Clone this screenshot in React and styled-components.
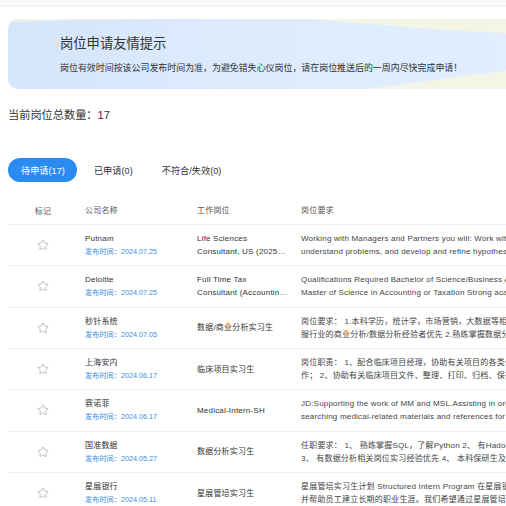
import React from "react"
import styled, { createGlobalStyle } from "styled-components"
import { Star } from "lucide-react"

const GlobalStyle = createGlobalStyle`
  html, body {
    margin: 0;
    padding: 0;
    background: #fff;
    overflow: hidden;
  }
  body {
    font-family: "Liberation Sans", "Noto Sans CJK SC", sans-serif;
    color: #333;
  }
`

const jobs = [
  {
    company: "Putnam",
    date: "2024.07.25",
    title: "Life Sciences Consultant, US (2025 Graduate Program)",
    req: [
      "Working with Managers and Partners you will: Work with clients to",
      "understand problems, and develop and refine hypotheses to solve them",
    ],
  },
  {
    company: "Deloitte",
    date: "2024.07.25",
    title: "Full Time Tax Consultant (Accounting Services)",
    req: [
      "Qualifications Required Bachelor of Science/Business Administration",
      "Master of Science in Accounting or Taxation Strong academic record",
    ],
  },
  {
    company: "秒针系统",
    date: "2024.07.05",
    title: "数据/商业分析实习生",
    req: [
      "岗位要求： 1.本科学历，统计学，市场营销，大数据等相关专业",
      "服行业的商业分析/数据分析经验者优先 2.熟练掌握数据分析工具",
    ],
  },
  {
    company: "上海安内",
    date: "2024.06.17",
    title: "临床项目实习生",
    req: [
      "岗位职责： 1、配合临床项目经理，协助有关项目的各类会议工",
      "作； 2、协助有关临床项目文件、整理、打印、归档、保存",
    ],
  },
  {
    company: "赛诺菲",
    date: "2024.06.17",
    title: "Medical-Intern-SH",
    req: [
      "JD:Supporting the work of MM and MSL.Assisting in organizing",
      "searching medical-related materials and references for the team",
    ],
  },
  {
    company: "国准数据",
    date: "2024.05.27",
    title: "数据分析实习生",
    req: [
      "任职要求： 1、 熟练掌握SQL，了解Python 2、 有Hadoop经验",
      "3、 有数据分析相关岗位实习经验优先 4、 本科保研生及在读",
    ],
  },
  {
    company: "星展银行",
    date: "2024.05.11",
    title: "星展管培实习生",
    req: [
      "星展管培实习生计划 Structured Intern Program 在星展银行",
      "并帮助员工建立长期的职业生涯。我们希望通过星展管培实习",
    ],
  },
]

const tabs = [
  { label: "待申请(17)", active: true },
  { label: "已申请(0)" },
  { label: "不符合/失效(0)" },
]

const App = () => (
  <Page>
    <GlobalStyle />
    <TopBar />
    <Content>
      <Banner>
        <BannerDeco viewBox="0 0 498 70" preserveAspectRatio="none">
          <path d="M300 0 C380 6 440 12 498 14 L498 0 Z" fill="#f4f6e3" />
          <path d="M0 0 L0 3 C60 1 140 0 220 0 Z" fill="#eef2e8" />
          <path d="M360 70 C420 62 460 56 498 52 L498 70 Z" fill="#f3f6e6" />
        </BannerDeco>
        <BannerTitle>岗位申请友情提示</BannerTitle>
        <BannerText>
          岗位有效时间按该公司发布时间为准，为避免错失心仪岗位，请在岗位推送后的一周内尽快完成申请！
        </BannerText>
      </Banner>

      <Count>当前岗位总数量：17</Count>

      <Tabs>
        {tabs.map(t => (
          <Tab key={t.label} $active={t.active}>
            {t.label}
          </Tab>
        ))}
      </Tabs>

      <Table>
        <HeaderRow>
          <MarkCell>标记</MarkCell>
          <Cell>公司名称</Cell>
          <Cell>工作岗位</Cell>
          <Cell>岗位要求</Cell>
        </HeaderRow>
        {jobs.map(job => (
          <Row key={job.company}>
            <MarkCell>
              <Star size={12} strokeWidth={1.1} color="#909090" />
            </MarkCell>
            <Cell>
              <Company>{job.company}</Company>
              <PubDate>发布时间：{job.date}</PubDate>
            </Cell>
            <Cell>
              <JobTitle>{job.title}</JobTitle>
            </Cell>
            <Cell>
              {job.req.map(line => (
                <ReqLine key={line}>{line}</ReqLine>
              ))}
            </Cell>
          </Row>
        ))}
      </Table>
    </Content>
  </Page>
)

export default App

const Page = styled.div`
  width: 506px;
  height: 506px;
  overflow: hidden;
`

const TopBar = styled.div`
  height: 6px;
  background: #f8f9fa;
  border-bottom: 1px solid #f1f2f4;
`

const Content = styled.div`
  padding-left: 8px;
`

const Banner = styled.div`
  position: relative;
  margin-top: 12px;
  height: 70px;
  box-sizing: border-box;
  padding: 16px 0 0 52px;
  border-radius: 10px 0 0 10px;
  overflow: hidden;
  background: linear-gradient(90deg, #d5e5fb 0%, #dcebfc 45%, #e2eefd 100%);
`

const BannerDeco = styled.svg`
  position: absolute;
  left: 0;
  top: 0;
  width: 100%;
  height: 100%;
  pointer-events: none;
`

const BannerTitle = styled.div`
  position: relative;
  font-size: 13.3px;
  line-height: 18px;
  color: #333;
`

const BannerText = styled.div`
  position: relative;
  margin-top: 9px;
  font-size: 8.95px;
  line-height: 12px;
  color: #333;
  white-space: nowrap;
`

const Count = styled.div`
  margin-top: 18px;
  font-size: 11.2px;
  line-height: 16px;
  color: #333;
`

const Tabs = styled.div`
  display: flex;
  gap: 4px;
  margin-top: 35px;
`

const Tab = styled.div`
  height: 24px;
  padding: 0 12px 0 13px;
  border-radius: 12px;
  display: flex;
  align-items: center;
  font-size: 9.2px;
  color: ${p => (p.$active ? "#fff" : "#333")};
  background: ${p => (p.$active ? "#2a8cf2" : "transparent")};
`

const Table = styled.div`
  margin-top: 14px;
  width: 760px;
`

const Row = styled.div`
  display: grid;
  grid-template-columns: 77px 112px 104px 1fr;
  align-items: center;
  box-sizing: border-box;
  height: 41.33px;
  border-bottom: 1px solid #eeeeee;
  font-size: 8px;
  letter-spacing: 0.2px;
  color: #333;
`

const HeaderRow = styled(Row)`
  height: 29px;
  color: #555;
`

const Cell = styled.div`
  min-width: 0;
  line-height: 13px;
`

const MarkCell = styled.div`
  padding-right: 7px;
  display: flex;
  justify-content: center;
  align-items: center;
`

const Company = styled.div`
  color: #333;
`

const PubDate = styled.div`
  font-size: 7.2px;
  letter-spacing: 0;
  color: #3d8de0;
`

const JobTitle = styled.div`
  width: 92px;
  display: -webkit-box;
  -webkit-box-orient: vertical;
  -webkit-line-clamp: 2;
  overflow: hidden;
  color: #333;
`

const ReqLine = styled.div`
  white-space: nowrap;
  color: #444;
`
